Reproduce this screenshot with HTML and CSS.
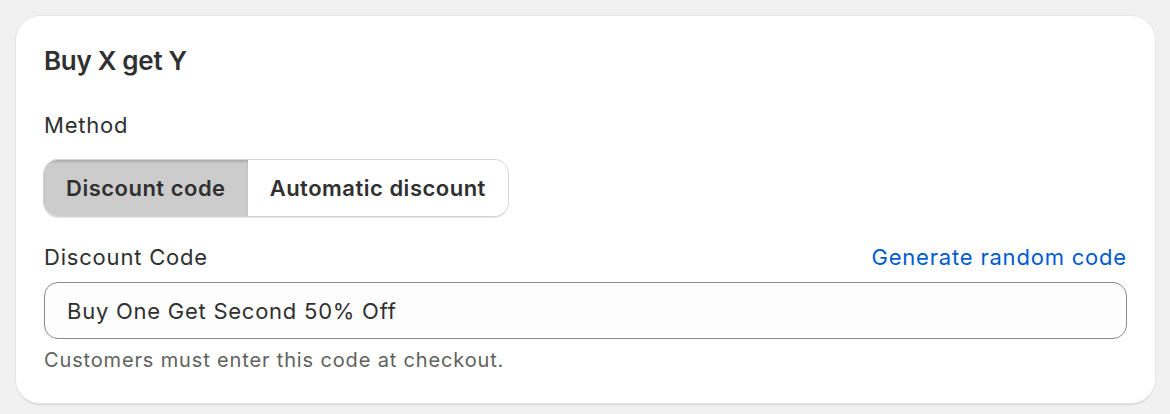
FILE: index.html
```html
<!DOCTYPE html>
<html lang="en">
<head>
    <meta charset="UTF-8">
    <meta name="viewport" content="width=device-width, initial-scale=1.0">
    <title>Buy X get Y</title>
    <link rel="stylesheet" href="styles.css">
</head>
<body>

    <!-- Discount method card -->
    <section class="card">
        <h2 class="card-title">Buy X get Y</h2>

        <p class="field-label">Method</p>
        <div class="segmented">
            <button class="segment segment-active">Discount code</button>
            <button class="segment">Automatic discount</button>
        </div>

        <div class="label-row">
            <label for="discount-code" class="field-label">Discount Code</label>
            <a href="#" class="link">Generate random code</a>
        </div>
        <input type="text" id="discount-code" class="text-input" value="Buy One Get Second 50% Off">
        <p class="help-text">Customers must enter this code at checkout.</p>
    </section>

</body>
</html>
```

FILE: styles.css
```css
/* General Body Styles */
body {
    font-family: Inter, "Noto Sans", sans-serif;
    background-color: #f1f1f1;
    color: #303030;
    margin: 0;
    padding: 16px 15px 10px 16px;
}

/* Card */
.card {
    background-color: #fff;
    border-radius: 24px;
    padding: 29px 28px 30px 28px;
    box-shadow: 0 0 0 1px #e6e6e6, 0 2px 1px rgba(0, 0, 0, 0.12);
}

.card-title {
    font-size: 26px;
    line-height: 32px;
    font-weight: 600;
    letter-spacing: -0.3px;
    margin: 0 0 34px 0;
}

.field-label {
    display: block;
    font-size: 22px;
    line-height: 28px;
    letter-spacing: 0.8px;
    margin: 0 0 21px 0;
}

/* Segmented control */
.segmented {
    display: inline-flex;
    border-radius: 14px;
    box-shadow: 0 0 0 1px #d4d4d4, 0 2px 0 rgba(0, 0, 0, 0.1);
    overflow: hidden;
    margin-bottom: 27px;
}

.segment {
    font-family: inherit;
    font-size: 22px;
    font-weight: 600;
    letter-spacing: 0.5px;
    color: #303030;
    background-color: #fff;
    border: none;
    height: 56px;
    padding: 0 22px;
    cursor: pointer;
}

.segment-active {
    background-color: #cccccc;
    box-shadow: inset 0 2px 2px rgba(0, 0, 0, 0.15);
}

/* Discount code field */
.label-row {
    display: flex;
    justify-content: space-between;
    align-items: baseline;
    margin-bottom: 11px;
}

.label-row .field-label {
    margin: 0;
}

.link {
    font-size: 22px;
    line-height: 28px;
    letter-spacing: 0.8px;
    color: #005bd3;
    text-decoration: none;
}

.text-input {
    display: block;
    box-sizing: border-box;
    width: 100%;
    height: 57px;
    padding: 0 22px;
    font-family: inherit;
    font-size: 22px;
    letter-spacing: 0.75px;
    color: #303030;
    background-color: #fdfdfd;
    border: 1px solid #8a8a8a;
    border-radius: 14px;
}

.help-text {
    font-size: 20px;
    line-height: 26px;
    letter-spacing: 0.85px;
    color: #616161;
    margin: 8px 0 0 0;
}
```
